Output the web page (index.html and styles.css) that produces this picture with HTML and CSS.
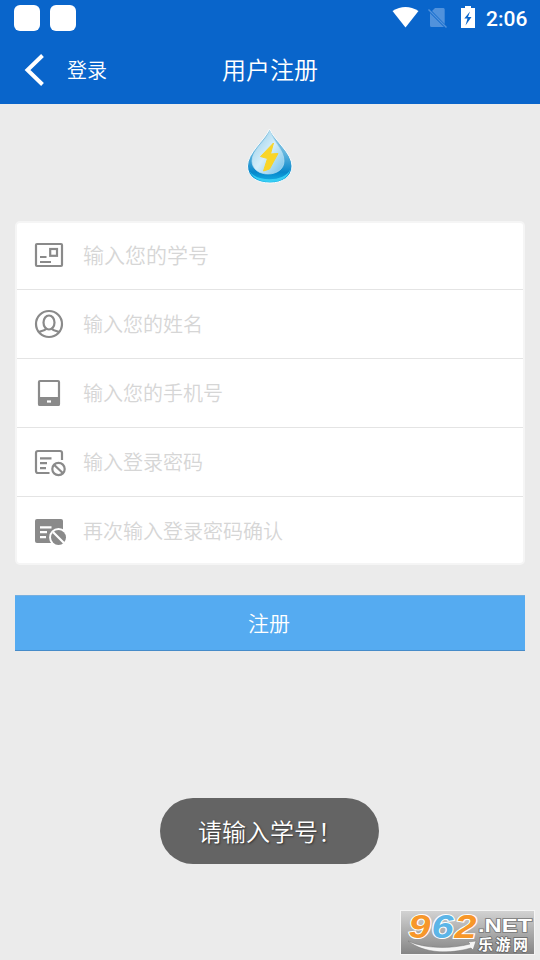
FILE: index.html
```html
<!DOCTYPE html>
<html lang="zh-CN">
<head>
<meta charset="utf-8">
<title>用户注册</title>
<link rel="stylesheet" href="styles.css">
</head>
<body>
<header class="header">
  <div class="status">
    <span class="notice"></span><span class="notice"></span>
    <svg class="status-icons" width="90" height="36" viewBox="390 0 90 36">
      <path d="M392.500 11Q405.500 3 418.500 11L405.500 27.500Z" fill="#fff"/>
      <path d="M435 8H443.500Q444.700 8 444.700 9.500V24L432 11ZM430 13L444 27H431.500Q430 27 430 25.500Z" fill="#5192dc"/>
      <path d="M428.500 9.500L446.500 27.500" stroke="#5192dc" stroke-width="1.500"/>
      <path d="M461 8H465V6H471V8H475V28H461Z" fill="#fff"/>
      <path d="M470 11.500L464.300 18.500H467.500L465.500 25.500L471.500 17H468Z" fill="#0965cb"/>
    </svg>
    <span class="clock">2:06</span>
  </div>
  <nav class="nav">
    <a class="back">
      <svg width="22" height="36" viewBox="0 0 22 36"><path d="M18.500 3.500L3.500 18L18.500 32.500" fill="none" stroke="#fff" stroke-width="4"/></svg>
      <span>登录</span>
    </a>
    <h1 class="title">用户注册</h1>
    <span></span>
  </nav>
</header>
<main class="main">
  <svg class="logo" width="50" height="58" viewBox="245 128 50 58">
    <defs>
      <linearGradient id="rim" x1="0" y1="0" x2="0" y2="1"><stop offset="0" stop-color="#9acbe3"/><stop offset=".45" stop-color="#62b5de"/><stop offset=".8" stop-color="#0787cb"/><stop offset="1" stop-color="#15b5e9"/></linearGradient>
      <linearGradient id="water" x1="0" y1="0" x2="1" y2="1"><stop offset="0" stop-color="#8ecae7"/><stop offset=".5" stop-color="#d5eefa"/><stop offset="1" stop-color="#72c1e9"/></linearGradient>
    </defs>
    <path d="M269.500 129C275 141 292 153 292 166C292 177 282 183 270 183C257 183 247.500 177 247.500 166C247.500 153 264 141 269.500 129Z" fill="url(#rim)" stroke="#f8fbfc" stroke-width="1"/>
    <path d="M249 170C254 182 285 183 290.500 169C288 179 279 182 270 182C260 182 252 178 249 170Z" fill="#37cdf3"/>
    <path d="M270 131C273 141 284 150 284 161C284 169 277 174 268 174C259 174 252 169 252 161C252 150 266 141 270 131Z" fill="url(#water)" stroke="#b7e0f2" stroke-width=".7"/>
    <path d="M273.500 143L260.500 156.500L267.500 158.500L263.500 171L269.500 169L278 153.500L270.500 154Z" fill="#f9d528" stroke="#f9d528" stroke-width="1" stroke-linejoin="round"/>
  </svg>
  <form class="form">
    <label class="row first">
      <svg class="icon" viewBox="0 0 36 32"><rect x="3" y="5" width="26" height="22" rx="1"/><rect x="17.200" y="10" width="6.800" height="6.800"/><path d="M7 18H13.500M7 23H18"/></svg>
      <span>输入您的学号</span>
    </label>
    <label class="row">
      <svg class="icon" viewBox="0 0 36 32"><circle cx="16" cy="16" r="13"/><ellipse cx="16" cy="14.500" rx="5.500" ry="7"/><path d="M5.500 24.500C7 23 11 23 13 21M19 21C21 23 25 23 26.500 24.500"/></svg>
      <span>输入您的姓名</span>
    </label>
    <label class="row">
      <svg class="icon" viewBox="0 0 36 32"><rect x="6" y="4" width="20" height="24" rx="1"/><path d="M5 20H27V27Q27 29 25 29H7Q5 29 5 27Z" class="solid"/><path d="M14 24.500H18" class="white"/></svg>
      <span>输入您的手机号</span>
    </label>
    <label class="row">
      <svg class="icon" viewBox="0 0 36 32"><path d="M16.500 27H5Q3 27 3 25V7Q3 5 5 5H27Q29 5 29 7V14M7 12.300H18.500M7 17.200H14M7 22.200H13"/><circle cx="25.500" cy="23" r="6.200"/><path d="M21 18.700L30 27.300"/></svg>
      <span>输入登录密码</span>
    </label>
    <label class="row last">
      <svg class="icon" viewBox="0 0 36 32"><rect x="2" y="4" width="28" height="24" rx="2" class="solid"/><path d="M7 12.300H18.500M7 17.200H14M7 22.200H13" class="white"/><circle cx="25.500" cy="22.500" r="8.300" class="white fill"/><circle cx="25.500" cy="22.500" r="7.500" class="solid"/><path d="M20 17L31 28" class="white"/></svg>
      <span>再次输入登录密码确认</span>
    </label>
  </form>
  <button class="submit" type="button">注册</button>
</main>
<div class="toast">请输入学号！</div>
<div class="mark">
  <svg width="133" height="43" viewBox="401 911 133 43">
    <g class="digits"><text x="408.500" y="937.500" fill="#f7972a" textLength="22" lengthAdjust="spacingAndGlyphs">9</text><text x="431.500" y="937.500" fill="#5cb5e7" textLength="22" lengthAdjust="spacingAndGlyphs">6</text><text x="454.500" y="937.500" fill="#f7972a" textLength="22" lengthAdjust="spacingAndGlyphs">2</text></g>
    <path d="M408 941C425 949 451 949 470 944L468 942L476 941L473 950L471 948C450 954 425 954 408 941Z" fill="#f4f4f4" stroke="#777" stroke-width=".5"/>
    <text class="net" x="478" y="931.500" textLength="54" lengthAdjust="spacingAndGlyphs">.NET</text>
    <text class="site" x="478" y="949.500" textLength="50">乐游网</text>
  </svg>
</div>
</body>
</html>
```

FILE: styles.css
```css
* { box-sizing: border-box; }
body {
  margin: 0;
  height: 960px;
  position: relative;
  overflow: hidden;
  background: #ebebeb;
  font-family: "Noto Sans CJK SC", sans-serif;
  font-weight: 350;
}
.header { height: 104px; background: #0965cb; color: #fff; }
.status { height: 36px; display: flex; align-items: center; gap: 10px; padding: 0 12px 0 14px; }
.notice { width: 26px; height: 26px; border-radius: 6px; background: #fff; }
.status-icons { margin-left: auto; }
.clock { font: 500 21px/36px Roboto, sans-serif; width: 42px; margin-left: -4px; padding-top: 2px; white-space: nowrap; }
.nav { height: 68px; display: grid; grid-template-columns: 1fr auto 1fr; align-items: center; }
.back { display: flex; align-items: center; gap: 21px; padding-left: 24px; font-size: 20px; line-height: 30px; }
.title { margin: 0; padding-bottom: 2px; font-size: 24px; font-weight: 350; line-height: 36px; }
.main { padding: 24px 15px 0; display: flex; flex-direction: column; align-items: stretch; }
.logo { align-self: center; margin-bottom: 35px; }
.form { border: 2px solid #f5f5f5; border-radius: 5px; background: #fff; height: 344px; }
.row { height: 69px; display: flex; align-items: center; gap: 14px; padding-left: 16px; border-bottom: 1px solid #e4e4e4; color: #d6d6d6; font-size: 20px; line-height: 30px; }
.first { height: 67px; padding-bottom: 2px; font-size: 21px; }
.first span { padding-bottom: 2px; }
.last { border: 0; height: 68px; }
.icon { width: 36px; height: 32px; flex: none; fill: none; stroke: #8a8a8a; stroke-width: 2.2; }
.icon .solid { fill: #8a8a8a; stroke: none; }
.icon .white { stroke: #fff; }
.icon .fill { fill: #fff; }
.submit { margin-top: 30px; height: 56px; border: 0; border-top: 1px solid #75afe0; border-bottom: 1px solid #468bc9; padding: 0 2px 1px 0; background: #55abf1; color: #fff; font: 350 21px/53px "Noto Sans CJK SC", sans-serif; }
.toast { position: absolute; left: 160px; top: 798px; width: 219px; height: 66px; border-radius: 33px; background: #646464; color: #fff; font-size: 24px; line-height: 66px; padding-left: 38px; white-space: nowrap; text-shadow: 1px 1px 2px #333; }
.mark { position: absolute; left: 400px; top: 910px; width: 135px; height: 45px; border: 1px solid #f5f5f5; background: linear-gradient(#d2d2d2, #858585); }
.mark svg { display: block; overflow: visible; }
.digits { font: italic 700 33px "Liberation Sans", sans-serif; stroke: #fff; stroke-width: 2px; paint-order: stroke; }
.net { font: 700 18px "Liberation Sans", sans-serif; fill: #fff; stroke: #777; stroke-width: 1.5px; paint-order: stroke; }
.site { font: 700 15px "Noto Sans CJK SC", sans-serif; fill: #fff; stroke: #666; stroke-width: 1.5px; paint-order: stroke; }
```
